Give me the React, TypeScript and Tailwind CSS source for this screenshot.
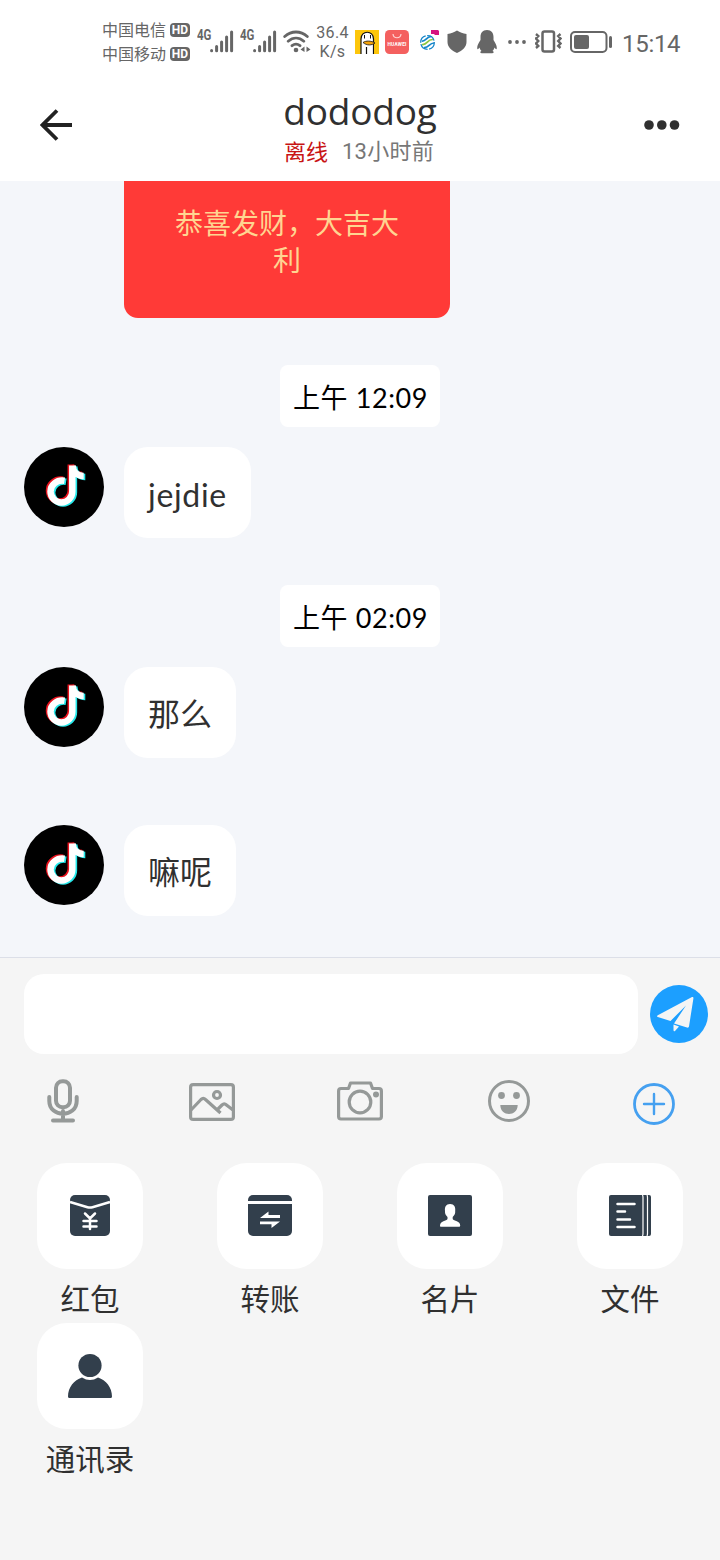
import type { ReactNode } from "react";

const messages = [
  { id: 1, time: "上午 12:09", text: "jejdie" },
  { id: 2, time: "上午 02:09", text: "那么" },
  { id: 3, time: "", text: "嘛呢" },
];

const notePath = "M40.500 33.800C32.700 32.500 26.500 38 26.500 44.500a10.900 10.900 0 0 0 21.800 0V18.500M48.500 18.500c.5 6.500 5 10.500 11.200 10.500";

const Carrier = ({ name }: { name: string }) => (
  <div className="flex h-6 items-center gap-[3px]">
    <span className="-ml-px w-[65px] text-base leading-6 whitespace-nowrap">{name}</span>
    <span className="flex h-[14px] w-5 items-center justify-center rounded-[4px] bg-[#666] font-['Roboto',sans-serif] text-xs font-bold text-white">
      HD
    </span>
  </div>
);

const Signal = () => (
  <div className="relative h-6 w-9">
    <span className="absolute -top-px left-0 origin-left scale-x-[0.82] font-['Roboto',sans-serif] text-[14px] leading-[13px] font-bold">4G</span>
    <svg className="absolute top-0 left-[13px]" width="24" height="24" viewBox="0 0 24 24" stroke="#666" strokeWidth="3" strokeLinecap="round">
      <path d="M1.600 20.500v.2M6.600 16.500v4.200M11.600 12v8.700M16.600 7v13.700M21.600 2v18.700" />
    </svg>
  </div>
);

const StatusBar = () => (
  <div className="flex h-20 items-start pt-[18px] pl-[103px] text-[#666]">
    <div className="w-[94px]">
      <Carrier name="中国电信" />
      <Carrier name="中国移动" />
    </div>
    <div className="flex h-12 items-center">
      <Signal />
      <div className="ml-[7px]">
        <Signal />
      </div>
      <svg className="ml-[7px]" width="28" height="24" viewBox="0 0 28 24" fill="none" stroke="#666" strokeWidth="2.800" strokeLinecap="round">
        <path d="M1.700 6.500C8.500 .5 17.500 .5 24.300 6.500M5.200 11.200c4.800-4.100 10.800-4.100 15.600 0M9 15.700c2.500-2 5.500-2 8 0" />
        <circle cx="13" cy="20" r="2.300" fill="#666" stroke="none" />
        <path d="M21.500 16.500v5.500l-4-2.600zM23.500 16.500v5.500l4-2.600z" fill="#666" stroke="none" />
      </svg>
      <div className="ml-[5px] flex w-[33px] flex-col items-center font-['Roboto',sans-serif] text-base leading-[19px] tracking-[0.3px]">
        <span>36.4</span>
        <span>K/s</span>
      </div>
      <svg className="ml-1.5" width="24" height="24" viewBox="0 0 24 24">
        <path fill="#fdc60b" d="M0 0h24v24H0z" />
        <path fill="#fff" stroke="#111" strokeWidth="1.200" d="M6 24V9c0-9 12.500-9 12.500 0v15" />
        <path fill="#fdc60b" d="M19.200 14v10H24V14z" />
        <path fill="none" stroke="#111" strokeWidth="1.200" d="M11.500 24v-7" />
        <path fill="#f5a40b" stroke="#111" strokeWidth=".8" d="M8 12.500c3-2 8-2 12 .5-3 2.300-8 3-12-.5z" />
        <path fill="none" stroke="#111" strokeWidth="1" d="M9.500 5v3.500M15.500 5v3.500" />
      </svg>
      <svg className="ml-1.5" width="24" height="24" viewBox="0 0 24 24">
        <rect width="24" height="24" rx="4.500" fill="#f4605f" />
        <path d="M8 4c.5 5 7.500 5 8 0" fill="none" stroke="#ffd4d4" strokeWidth="1.200" />
        <text x="2.500" y="15.500" fill="#fff" fontSize="4.800" fontWeight="700" textLength="19" fontFamily="Roboto, sans-serif">HUAWEI</text>
      </svg>
      <svg className="ml-[11px]" width="22" height="24" viewBox="0 0 22 24" fill="none">
        <circle cx="7.500" cy="12.500" r="6.800" stroke="#1686c9" strokeWidth="1.300" strokeDasharray="9 1.500" />
        <path d="M2 11c4 .5 4-4 9-4.500" stroke="#1686c9" strokeWidth="1.700" />
        <path d="M2 14.500c5.500 1 5-5.500 11-5" stroke="#8cc63f" strokeWidth="1.700" />
        <path d="M4 17.500c5 .5 5-4.500 10-4.500" stroke="#1686c9" strokeWidth="1.700" />
        <path d="M11 0h7l1 1v4h-4.500V4H11z" fill="#d5147f" />
      </svg>
      <svg className="ml-[5px]" width="20" height="24" viewBox="0 0 20 24" fill="#666">
        <path d="M10 .5c3 2 6 3 9.500 3.500V12c0 5-4 8.500-9.500 11C4.500 20.500.5 17 .5 12V4C4 3.500 7 2.500 10 .5z" />
      </svg>
      <svg className="ml-2.5" width="20" height="24" viewBox="0 0 20 24" fill="#666">
        <path d="M10 0C5.500 0 3.500 3 3.500 7v3C1.500 13 .2 15.500.2 18c0 1.800 1 1.500 2.300-.5.4 1.500 1 2.500 2 3.500-2 .8-1.500 2.200 1 2.200h9c2.500 0 3-1.400 1-2.200 1-1 1.600-2 2-3.500 1.300 2 2.300 2.300 2.300.5 0-2.500-1.300-5-3.300-8V7c0-4-2-7-6.500-7z" />
      </svg>
      <svg className="ml-[11px]" width="18" height="4" viewBox="0 0 18 4" fill="#666">
        <circle cx="2" cy="2" r="1.900" />
        <circle cx="9" cy="2" r="1.900" />
        <circle cx="16" cy="2" r="1.900" />
      </svg>
      <svg className="ml-[9px]" width="27" height="24" viewBox="0 0 27 24" fill="none" stroke="#666">
        <rect x="7.500" y="1.500" width="11.500" height="20" rx="2" strokeWidth="2.500" />
        <path d="M1 4l2.300 2-2.300 2.500 2.300 2.500-2.300 2.500 2.300 2.500-2.300 2M25.500 4l-2.300 2 2.300 2.500-2.300 2.500 2.300 2.500-2.300 2.500 2.300 2" strokeWidth="2.400" />
      </svg>
      <svg className="ml-2" width="43" height="22" viewBox="0 0 43 22" fill="#666">
        <rect x="1" y="1" width="35.500" height="20" rx="4" fill="none" stroke="#666" strokeWidth="2" />
        <rect x="4" y="4" width="15" height="14" rx="2" />
        <rect x="39" y="5" width="3" height="12" rx="1.500" />
      </svg>
      <span className="ml-[9px] pt-[3px] font-['Roboto',sans-serif] text-2xl tracking-[-0.3px]">15:14</span>
    </div>
  </div>
);

const Avatar = () => (
  <svg className="shrink-0 rounded-full bg-black" width="80" height="80" viewBox="0 0 80 80" fill="none" strokeWidth="6.500">
    <path d={notePath} stroke="#e8121d" transform="translate(-1.500 -1)" />
    <path d={notePath} stroke="#25e8ea" transform="translate(1.600 1)" />
    <path d={notePath} stroke="#fff" />
  </svg>
);

const tools = [
  {
    name: "mic",
    margin: "",
    icon: (
      <svg width="32" height="44" viewBox="0 0 32 44" fill="none" stroke="#959998" strokeWidth="4" strokeLinecap="round">
        <rect x="9" y="2.200" width="14" height="26" rx="6.500" />
        <path d="M2.300 18v4c0 17 27.400 17 27.400 0v-4M16 32v9M6 41.500h20" />
      </svg>
    ),
  },
  {
    name: "image",
    margin: "ml-[110px] pt-px",
    icon: (
      <svg width="46" height="38" viewBox="0 0 46 38" fill="none" stroke="#959998" strokeWidth="3.200">
        <rect x="1.600" y="1.600" width="42.800" height="34.800" rx="2.500" />
        <circle cx="28" cy="12" r="3.500" />
        <path d="M2 27l10-10.500c1.500-1.500 3-1.500 4.500 0L31.500 30M28 27l5-5c1.500-1.500 3-1.500 4.500 0l6.500 5" />
      </svg>
    ),
  },
  {
    name: "camera",
    margin: "ml-[102px]",
    icon: (
      <svg width="46" height="40" viewBox="0 0 46 40" fill="none" stroke="#959998" strokeWidth="3.200" strokeLinejoin="round">
        <path d="M4 7.500h7.500l2-5.500h20l2 5.500H42q2.400 0 2.400 2.500v25.500q0 2.500-2.400 2.500H4q-2.400 0-2.400-2.500V10Q1.600 7.500 4 7.500z" />
        <circle cx="23" cy="21" r="10.800" />
        <circle cx="39" cy="13.500" r="3" fill="#959998" stroke="none" />
      </svg>
    ),
  },
  {
    name: "smile",
    margin: "ml-[105px]",
    icon: (
      <svg width="42" height="42" viewBox="0 0 42 42" fill="#959998">
        <circle cx="21" cy="21" r="19.500" fill="none" stroke="#959998" strokeWidth="3" />
        <circle cx="13.500" cy="15.500" r="3.400" />
        <circle cx="28.500" cy="15.500" r="3.400" />
        <path d="M12.300 25h17.400c0 12-17.400 12-17.400 0z" />
      </svg>
    ),
  },
  {
    name: "more",
    margin: "ml-[103px] pt-[3px]",
    icon: (
      <svg width="42" height="42" viewBox="0 0 42 42" fill="none" stroke="#45a0f0" strokeWidth="2.800" strokeLinecap="round">
        <circle cx="21" cy="21" r="19.500" />
        <path d="M11 21h20M21 11v20" strokeWidth="2.400" />
      </svg>
    ),
  },
];

const actions: { label: string; icon: ReactNode }[] = [
  {
    label: "红包",
    icon: (
      <>
        <rect x="33" y="32" width="40" height="41" rx="5" fill="#323f4c" />
        <path d="M33 39l17.500 5.200q2.500.7 5 0L73 39" stroke="#fff" strokeWidth="2.500" />
        <path d="M48 50.500l5 5 5-5M53 55.500V66M46.500 58h13M46.500 63.500h13" stroke="#fff" strokeWidth="2.500" strokeLinecap="round" />
      </>
    ),
  },
  {
    label: "转账",
    icon: (
      <>
        <rect x="31" y="32" width="44" height="41" rx="5" fill="#323f4c" />
        <path d="M31 39.500h44" stroke="#fff" strokeWidth="2.800" />
        <path d="M43 54.900l8.500-6.500v3.700H63v2.800zM63 58.500l-8.500 6.500v-3.700H43v-2.800z" fill="#fff" />
      </>
    ),
  },
  {
    label: "名片",
    icon: (
      <>
        <rect x="31" y="32" width="44" height="41" rx="2" fill="#323f4c" />
        <path d="M53 41c-4 0-5.500 3-5 7-.3 3 1 4.500 2.500 6v2c-1 2-7.500 2-7.500 6.500 0 .8.300 1.300 1.100 1.300h17.800c.8 0 1.300-.5 1.300-1.300 0-4.500-6.500-4.500-7.500-6.500v-2c1.500-1.500 2.800-3 2.500-6 .5-4-1-7-5-7z" fill="#fff" />
      </>
    ),
  },
  {
    label: "文件",
    icon: (
      <>
        <rect x="32" y="32" width="42" height="41" rx="2" fill="#323f4c" />
        <path d="M65.500 32q.5 1 .5 2.500v36q0 1.500-.5 2.500M70 32q.5 1 .5 2.500v36q0 1.500-.5 2.500" stroke="#fff" strokeWidth="1.200" />
        <path d="M40.500 41h17M40.500 48.500h7.500M40.500 56.500h12.500M40.500 64h17" stroke="#fff" strokeWidth="2.500" strokeLinecap="round" />
      </>
    ),
  },
  {
    label: "通讯录",
    icon: (
      <>
        <circle cx="53" cy="42.500" r="11.600" fill="#323f4c" />
        <path d="M45 54.500q8 5 16 0c8 2.500 14 10 14 19q0 1.500-1.500 1.500h-41Q31 75 31 73.500c0-9 6-16.500 14-19z" fill="#323f4c" />
      </>
    ),
  },
];

export default function App() {
  return (
    <div className="flex h-[1560px] w-[720px] flex-col overflow-hidden bg-white font-['Lato','Noto_Sans_CJK_SC',sans-serif] text-[#303030]">
      <StatusBar />

      <header className="flex h-[101px] shrink-0 justify-between px-10">
        <svg className="mt-[29px]" width="34" height="32" viewBox="0 0 34 32" fill="none" stroke="#222" strokeWidth="3.800">
          <path d="M17 1.500L2.500 16 17 30.500M2.500 16H32" />
        </svg>
        <div className="flex flex-col items-center pt-[9px]">
          <h1 className="h-12 pl-0.5 font-['Open_Sans',sans-serif] text-[37px] leading-[44px] tracking-[-0.2px]">dododog</h1>
          <p className="flex gap-3.5 text-[22px] leading-[29px]">
            <span className="text-[#c81414]">离线</span>
            <span className="font-['Roboto','Noto_Sans_CJK_SC',sans-serif] tracking-[0.3px] text-[#777]">13小时前</span>
          </p>
        </div>
        <svg className="mt-[39px]" width="36" height="12" viewBox="0 0 36 12" fill="#303030">
          <circle cx="5" cy="6" r="4.800" />
          <circle cx="17.800" cy="6" r="4.800" />
          <circle cx="30.500" cy="6" r="4.800" />
        </svg>
      </header>

      <main className="h-[776px] shrink-0 bg-[#f4f6fa] px-6">
        <div className="ml-[100px] h-[137px] w-[326px] rounded-b-[14px] bg-[#ff3a37] px-[50px] pt-6 text-center text-[28px] leading-[37px] text-[#ffd591]">
          恭喜发财，大吉大利
        </div>
        {messages.map((msg) => (
          <div key={msg.id} className={msg.time ? "pt-[47px]" : "pt-[67px]"}>
            {msg.time && (
              <div className="mx-auto mb-5 flex h-[62px] w-40 items-center justify-center rounded-lg bg-white pt-1 pl-px text-[27px] tracking-[0.6px] whitespace-pre text-black">
                {msg.time}
              </div>
            )}
            <div className="flex gap-5">
              <Avatar />
              <div
                className={
                  msg.id === 1
                    ? "flex h-[91px] items-center rounded-3xl bg-white px-6 pt-1 text-[32px] tracking-[0.7px]"
                    : "flex h-[91px] items-center rounded-3xl bg-white px-6 pt-0.5 text-[32px]"
                }
              >
                {msg.text}
              </div>
            </div>
          </div>
        ))}
      </main>

      <footer className="flex-1 border-t border-[#dcdfe8] bg-[#f5f5f5] pt-4">
        <div className="flex items-center gap-3 pr-3 pl-6">
          <div className="h-20 flex-1 rounded-[20px] bg-white" />
          <svg width="58" height="58" viewBox="0 0 58 58">
            <circle cx="29" cy="29" r="29" fill="#1c9fff" />
            <path d="M42 12Q43.700 11.500 43.400 13.500L39 41.500q-.3 1.500-2 1L24 38.500l12-18L20.500 36l-12.700-4q-1.500-.8 0-1.700z" fill="#f5f5f5" />
            <path d="M23.500 39.500l5.500 2-4 4.500q-1.500 1-1.500-1z" fill="#f5f5f5" />
          </svg>
        </div>
        <div className="flex h-[109px] items-start pt-[25px] pl-[47px]">
          {tools.map((tool) => (
            <div key={tool.name} className={tool.margin}>
              <div className="flex h-11 items-center">{tool.icon}</div>
            </div>
          ))}
        </div>
        <div className="grid grid-cols-4">
          {actions.map((action) => (
            <div key={action.label} className="flex h-40 flex-col items-center">
              <svg className="rounded-[30px] bg-white" width="106" height="106" viewBox="0 0 106 106" fill="none">
                {action.icon}
              </svg>
              <span className="pt-2 text-[29.500px] leading-[44px]">{action.label}</span>
            </div>
          ))}
        </div>
      </footer>
    </div>
  );
}
